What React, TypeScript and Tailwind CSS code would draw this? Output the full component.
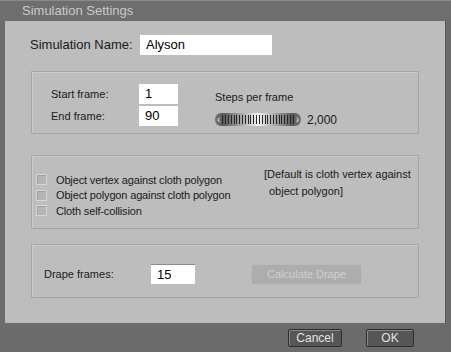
import React from 'react';

const font = { fontFamily: '"Liberation Sans", Arial, sans-serif' };

function Field({ value, className }: { value: string; className: string }) {
  return (
    <div className={`flex h-[20px] items-center bg-white pl-[6px] text-[13px] text-black ${className}`}>{value}</div>
  );
}

function Box({ className, children }: { className: string; children: React.ReactNode }) {
  return (
    <div className={`ml-[26px] w-[388px] border border-[#a6a6a6] shadow-[inset_1px_1px_0_#cbcbcb] ${className}`}>
      {children}
    </div>
  );
}

function Check({ label }: { label: string }) {
  return (
    <div className="flex h-[15.5px] items-center">
      <span className="mr-[9px] h-[11px] w-[11px] border border-[#d6d6d6] bg-[#b5b5b5] shadow-[inset_1px_1px_0_#a0a0a0]" />
      <span className="tracking-[-0.15px]">{label}</span>
    </div>
  );
}

function Slider() {
  const ticks = Array.from({ length: 26 });
  return (
    <div className="flex h-[13px] w-[86px] items-center rounded-[6px] bg-[linear-gradient(90deg,#777_0%,#5a5a5a_10%,#b8b8b8_35%,#f4f4f4_50%,#b8b8b8_65%,#5a5a5a_90%,#777_100%)] px-[2px]">
      <span className="text-[10px] leading-none text-[#e8e8e8]">‹</span>
      <div className="mx-[2px] flex h-[9px] flex-1 items-stretch justify-between">
        {ticks.map((_, i) => (
          <span key={i} className="w-[1px] bg-[#262626]" />
        ))}
      </div>
      <span className="text-[10px] leading-none text-[#e8e8e8]">›</span>
    </div>
  );
}

export default function App() {
  return (
    <div style={font} className="flex h-[352px] w-[451px] flex-col bg-[#6b6b6b] text-[#1a1a1a]">
      <div className="flex h-[21px] items-center border-t border-[#8a8a8a] bg-[#6e6e6e] pl-[22px] text-[13px] text-[#cacaca]">
        Simulation Settings
      </div>
      <div className="flex flex-1 px-[5px]">
        <div className="flex flex-1 flex-col border-r border-[#555] bg-[#bdbdbd] pt-[14px] text-[11px]">
          <div className="flex h-[20px] items-center">
            <span className="ml-[25px] w-[110px] text-[13px]">Simulation Name:</span>
            <Field value="Alyson" className="w-[132px]" />
          </div>

          <Box className="mt-[16px] h-[63px]">
            <div className="flex pl-[19px] pt-[12px]">
              <div className="flex flex-col gap-[2px]">
                <div className="flex items-center">
                  <span className="w-[88px]">Start frame:</span>
                  <Field value="1" className="w-[39px]" />
                </div>
                <div className="flex items-center">
                  <span className="w-[88px]">End frame:</span>
                  <Field value="90" className="w-[39px]" />
                </div>
              </div>
              <div className="ml-[37px] flex flex-col pt-[5px]">
                <span>Steps per frame</span>
                <div className="mt-[5px] flex items-center">
                  <Slider />
                  <span className="ml-[6px] text-[12px]">2,000</span>
                </div>
              </div>
            </div>
          </Box>

          <Box className="mt-[21px] h-[74px]">
            <div className="flex pl-[4px] pt-[10px]">
              <div className="flex w-[228px] flex-col pt-[6px]">
                <Check label="Object vertex against cloth polygon" />
                <Check label="Object polygon against cloth polygon" />
                <Check label="Cloth self-collision" />
              </div>
              <div className="flex flex-col leading-[17px]">
                <span>[Default is cloth vertex against</span>
                <span className="pl-[5px]">object polygon]</span>
              </div>
            </div>
          </Box>

          <Box className="mt-[15px] h-[54px]">
            <div className="flex items-center pl-[12px] pt-[19px]">
              <span className="w-[107px]">Drape frames:</span>
              <Field value="15" className="w-[44px] border-t border-[#8a8a8a]" />
              <div className="ml-[57px] flex h-[19px] w-[109px] items-center justify-center rounded-[3px] bg-[#adadad] text-[11px] text-[#cfcfcf] shadow-[0_0_1px_#999]">
                Calculate Drape
              </div>
            </div>
          </Box>
        </div>
      </div>
      <div className="flex h-[29px] items-center justify-end gap-[24px] pr-[37px] text-[12px]">
        <div className="flex h-[18px] w-[54px] items-center justify-center rounded-[2px] border border-[#2e2e2e] bg-[#565656] text-[#e2e2e2] shadow-[inset_1px_1px_0_#888]">
          Cancel
        </div>
        <div className="flex h-[18px] w-[48px] items-center justify-center rounded-[2px] border border-[#2e2e2e] bg-[#565656] text-[#e2e2e2] shadow-[inset_1px_1px_0_#888]">
          OK
        </div>
      </div>
    </div>
  );
}
